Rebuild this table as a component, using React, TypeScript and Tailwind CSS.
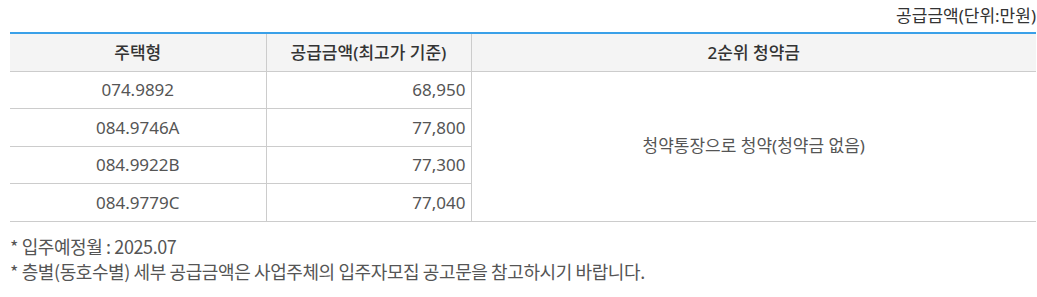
const rows = [
  { type: '074.9892', price: '68,950' },
  { type: '084.9746A', price: '77,800' },
  { type: '084.9922B', price: '77,300' },
  { type: '084.9779C', price: '77,040' },
];

export default function App() {
  return (
    <div className="w-[1037px] h-[297px] bg-white pl-[10px] pr-px font-['Noto_Sans','Noto_Sans_CJK_KR',sans-serif]">
      {/* 단위 */}
      <p className="h-[32px] pt-[4px] text-right text-[17px] leading-[24px] text-[#333]">
        공급금액(단위:만원)
      </p>

      <table className="w-full table-fixed border-collapse border-t-2 border-[#3aa0e8] text-[17px]">
        <colgroup>
          <col className="w-[256px]" />
          <col className="w-[205px]" />
          <col />
        </colgroup>
        <thead>
          <tr className="h-[38px] bg-[#f4f4f4] text-[#333]">
            <th className="border-b border-r border-[#cccccc] font-medium">주택형</th>
            <th className="border-b border-r border-[#cccccc] font-medium">공급금액(최고가 기준)</th>
            <th className="border-b border-[#cccccc] font-medium">2순위 청약금</th>
          </tr>
        </thead>
        <tbody className="text-[#555]">
          {rows.map((r, i) => (
            <tr key={r.type} className="h-[37.5px]">
              <td className="border-b border-r border-[#cccccc] text-center">{r.type}</td>
              <td className="border-b border-r border-[#cccccc] text-right pr-[5px]">{r.price}</td>
              {i === 0 && (
                <td rowSpan={4} className="border-b border-[#cccccc] text-center">
                  청약통장으로 청약(청약금 없음)
                </td>
              )}
            </tr>
          ))}
        </tbody>
      </table>

      {/* 안내 */}
      <ul className="mt-[12px] text-[18px] leading-[25px] text-[#555] tracking-[-0.4px] font-['Noto_Sans_CJK_KR',sans-serif]">
        <li>* 입주예정월 : 2025.07</li>
        <li>* 층별(동호수별) 세부 공급금액은 사업주체의 입주자모집 공고문을 참고하시기 바랍니다.</li>
      </ul>
    </div>
  );
}
